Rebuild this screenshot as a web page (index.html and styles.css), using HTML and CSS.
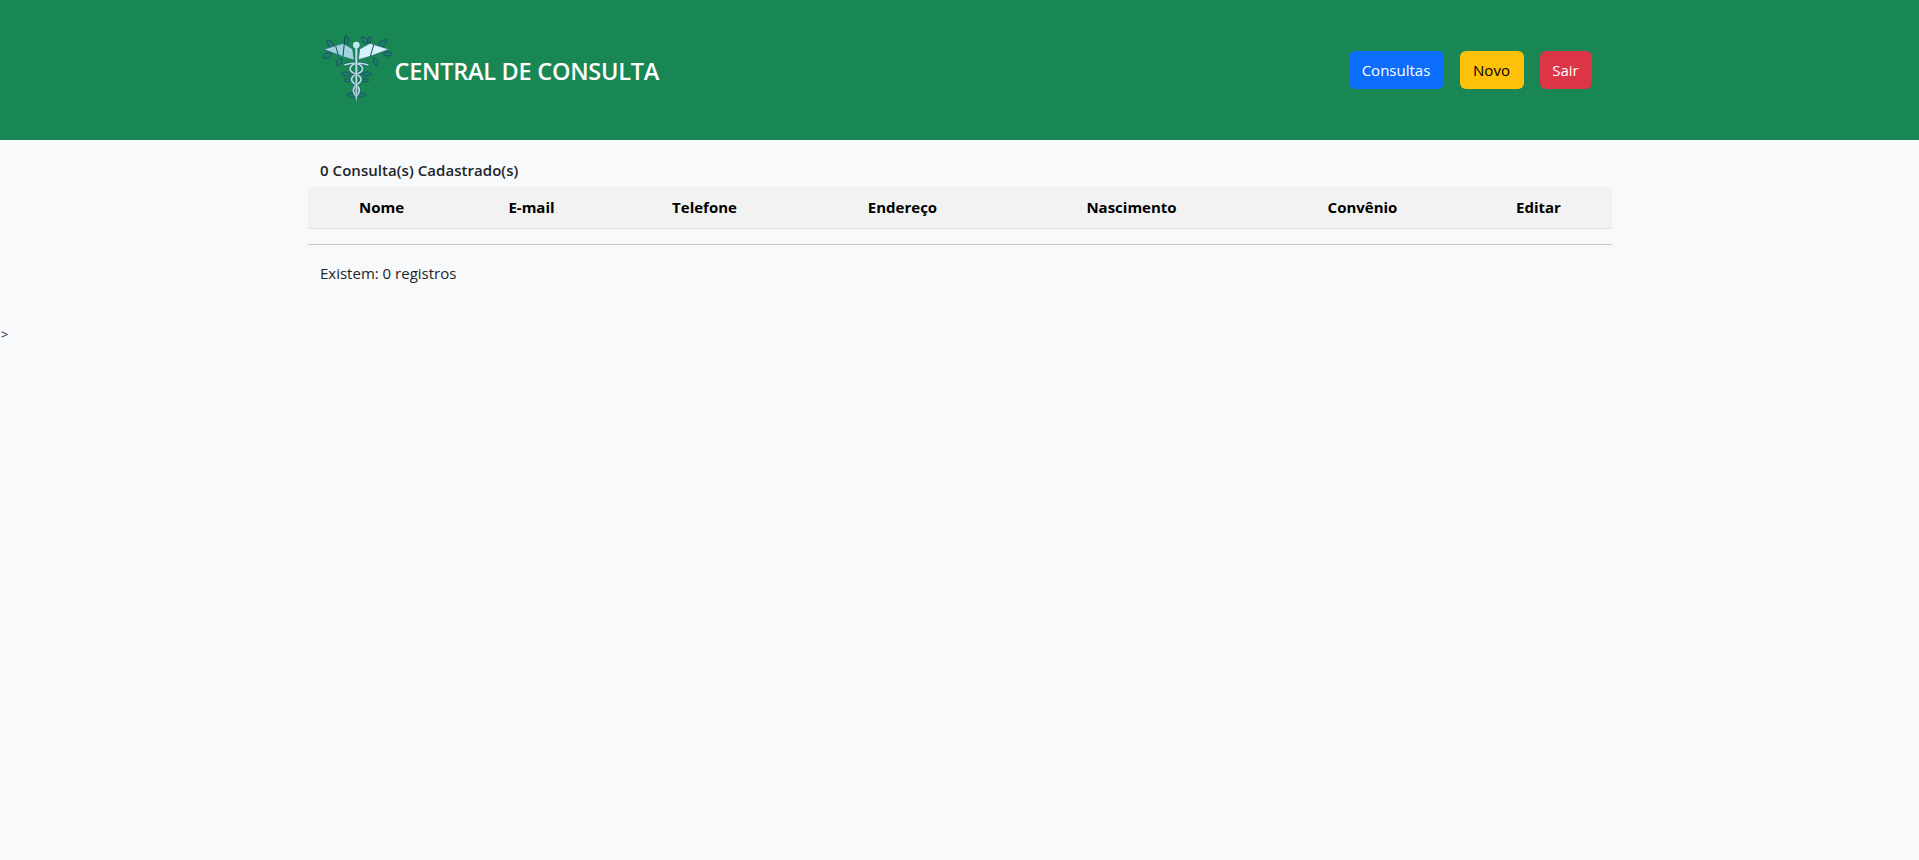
FILE: index.html
```html
<!DOCTYPE html>
<html lang="pt-BR">
<head>
  <meta charset="UTF-8">
  <title>Central de Consulta</title>
  <link rel="stylesheet" href="styles.css">
</head>
<body>

  <header class="topo">
    <div class="topo-inner">
      <div class="marca">
        <svg class="logo" viewBox="0 0 240 270" aria-hidden="true">
          <!-- folhas -->
          <g fill="#1f7a74" stroke="#154f55" stroke-width="2.5">
            <path d="M36 44q22 2 20 26q-22-2-20-26z"/>
            <path d="M24 98q4-20 26-14q-4 20-26 14z"/>
            <path d="M94 30q14 16 0 34q-12-18 0-34z"/>
            <path d="M140 36q18 0 18 18q-18 2-18-18z"/>
            <path d="M164 34q8 10 0 22q-12-10 0-22z"/>
            <path d="M214 44q2 22-22 22q-2-22 22-22z"/>
            <path d="M232 88q-14 12-28-2q14-12 28 2z"/>
            <path d="M64 122q-2-20 16-22q6 20-16 22z"/>
            <path d="M186 124q-16-8-8-26q16 8 8 26z"/>
            <path d="M78 146q14-12 30 2q-14 12-30-2z"/>
            <path d="M170 146q-14-12-30 2q14 12 30-2z"/>
            <path d="M86 166q10-10 24 0q-12 10-24 0z"/>
            <path d="M162 166q-10-10-24 0q12 10 24 0z"/>
            <path d="M96 208q14-10 26 6q-16 8-26-6z"/>
            <path d="M152 208q-14-10-26 6q16 8 26-6z"/>
          </g>
          <!-- asas -->
          <path d="M26 73 85 55 113 72 118 106 84 95Z" fill="#a0d3de" stroke="#1d5f68" stroke-width="2"/>
          <path d="M222 73 165 55 134 72 130 104 166 94Z" fill="#d6f1fb" stroke="#1d5f68" stroke-width="2"/>
          <path d="M90 34 84 94M62 64 70 90M176 60 166 94" stroke="#154f55" stroke-width="3" fill="none"/>
          <!-- cobras -->
          <g fill="none" stroke="#1d5f68" stroke-width="9">
            <path d="M88 120q36-12 52 4q10 14-16 24q-24 12-8 26q24 14 14 32q-8 10-6 10"/>
            <path d="M160 120q-36-12-52 4q-10 14 16 24q24 12 8 26q-24 14-14 32q8 10 6 10"/>
          </g>
          <g fill="none" stroke="#b8dde4" stroke-width="5">
            <path d="M88 120q36-12 52 4q10 14-16 24q-24 12-8 26q24 14 14 32q-8 10-6 10"/>
            <path d="M160 120q-36-12-52 4q-10 14 16 24q24 12 8 26q-24 14-14 32q8 10 6 10"/>
          </g>
          <!-- bastao -->
          <path d="M120 66h8l-1 146-3 24-3-24z" fill="#b8dde4" stroke="#1d5f68" stroke-width="1"/>
          <circle cx="124" cy="60" r="10" fill="#c6e8ef"/>
        </svg>
        <span class="marca-nome">CENTRAL DE CONSULTA</span>
      </div>
      <nav class="acoes">
        <a class="btn btn-azul" href="#">Consultas</a>
        <a class="btn btn-amarelo" href="#">Novo</a>
        <a class="btn btn-vermelho" href="#">Sair</a>
      </nav>
    </div>
  </header>

  <main class="conteudo">
    <p class="total">0 Consulta(s) Cadastrado(s)</p>
    <table class="tabela">
      <thead>
        <tr>
          <th class="col-nome">Nome</th>
          <th class="col-email">E-mail</th>
          <th class="col-fone">Telefone</th>
          <th class="col-end">Endereço</th>
          <th class="col-nasc">Nascimento</th>
          <th class="col-conv">Convênio</th>
          <th class="col-edit">Editar</th>
        </tr>
      </thead>
      <tbody></tbody>
    </table>
    <hr class="linha">
    <p class="registros">Existem: 0 registros</p>
  </main>

  <div class="sobra">&gt;</div>

</body>
</html>
```

FILE: styles.css
```css
body {
  margin: 0;
  min-height: 860px;
  font-family: "Open Sans", "Noto Sans", sans-serif;
  font-size: 15px;
  line-height: 24px;
  background: #f8f9fa;
  color: #212529;
}
.topo {
  background: #198754;
  height: 140px;
}
.topo-inner {
  width: 1304px;
  height: 100%;
  margin: 0 auto;
  padding: 0 20px 0 7px;
  box-sizing: border-box;
  display: flex;
  align-items: center;
  justify-content: space-between;
}
.marca {
  display: flex;
  align-items: center;
}
.logo {
  width: 80px;
  height: 90px;
}
.marca-nome {
  color: #fff;
  font-size: 23.5px;
  font-weight: 600;
  letter-spacing: -0.25px;
  padding-top: 1px;
}
.acoes {
  display: flex;
  gap: 16px;
}
.btn {
  height: 38px;
  box-sizing: border-box;
  display: flex;
  align-items: center;
  justify-content: center;
  border-radius: 6px;
  text-decoration: none;
  font-size: 15px;
}
.btn-azul {
  width: 95px;
  background: #0d6efd;
  color: #fff;
}
.btn-amarelo {
  width: 64px;
  background: #ffc107;
  color: #000;
}
.btn-vermelho {
  width: 52px;
  background: #dc3545;
  color: #fff;
}
.conteudo {
  width: 1304px;
  margin: 0 auto;
}
.total {
  margin: 0;
  padding: 18px 12.5px 0;
  height: 29px;
  font-weight: 600;
  letter-spacing: 0.05px;
}
.tabela {
  width: 100%;
  border-collapse: collapse;
  table-layout: fixed;
}
.tabela th {
  height: 40px;
  padding: 0 0 1px;
  background: #f2f2f2;
  color: #000;
  font-weight: 700;
  font-size: 15px;
  text-align: center;
  border-bottom: 1px solid #dee2e6;
}
.col-nome { width: 148px; }
.col-email { width: 152px; }
.col-fone { width: 194px; }
.col-end { width: 202px; }
.col-nasc { width: 256px; }
.col-conv { width: 206px; }
.col-edit { width: 146px; }
.linha {
  margin: 15px 0 0;
  border: 0;
  border-top: 1px solid #c6c7c9;
}
.registros {
  margin: 0;
  padding: 16px 12.5px 0;
}
.sobra {
  margin-top: 39px;
  padding-left: 1px;
  font-size: 13px;
  line-height: 20px;
}
```
